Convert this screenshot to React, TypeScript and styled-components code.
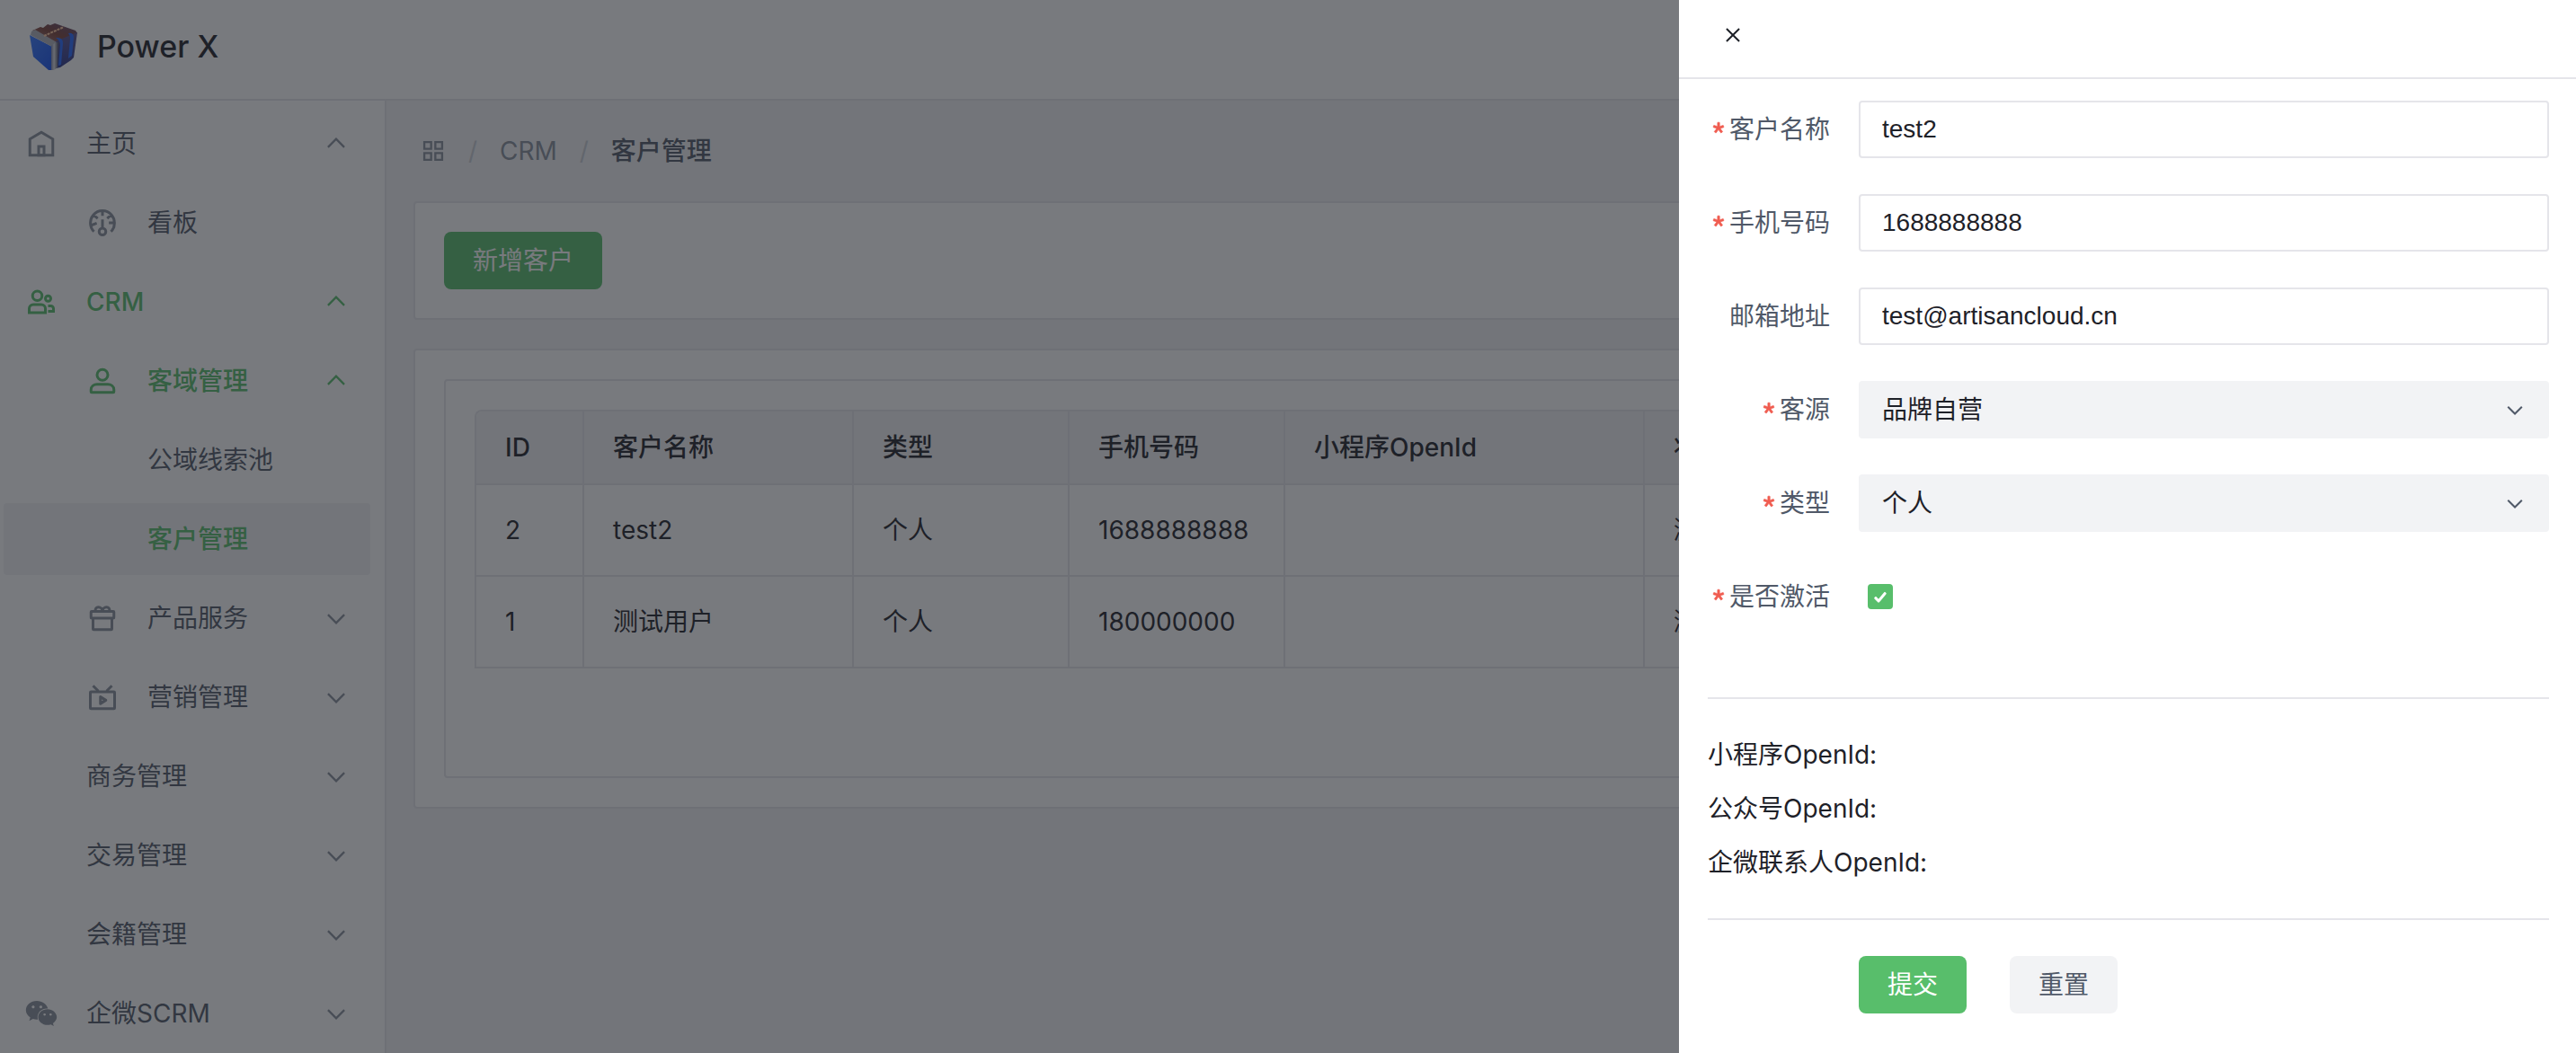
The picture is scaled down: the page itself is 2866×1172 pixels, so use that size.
import React, { useState } from "react";
import styled, { createGlobalStyle, css } from "styled-components";
import { FaWeixin } from "react-icons/fa6";

const color = {
  primary: "#58be6b",
  danger: "#f05c50",
  text1: "#1e2128",
  text2: "#505968",
  text3: "#88909b",
  text4: "#c9cdd4",
  border: "#e5e5ea",
  fill: "#f2f3f5",
  white: "#ffffff",
};

const uiFont = `Inter, "Noto Sans CJK SC", "Liberation Sans", sans-serif`;
const controlFont = `"Liberation Sans", "Noto Sans CJK SC", sans-serif`;

const GlobalStyle = createGlobalStyle`
  *, *::before, *::after { box-sizing: border-box; }
  body {
    margin: 0;
    background: ${color.fill};
    color: ${color.text1};
    font-family: ${uiFont};
    font-size: 28px;
    line-height: 44px;
    overflow: hidden;
  }
  button, input, select { font: inherit; color: inherit; }
`;

/* ---------- icons ---------- */

const Glyph = styled.svg<{ $size: number }>`
  display: block;
  flex: none;
  width: ${(p) => p.$size}px;
  height: ${(p) => p.$size}px;
  fill: none;
  stroke: currentColor;
  stroke-width: 4;
`;

type IconName =
  | "home" | "dashboard" | "group" | "user" | "gift" | "live" | "apps" | "up" | "down" | "close";

const shapes: Record<IconName, React.ReactNode> = {
  home: (
    <>
      <path d="M7 17 24 7l17 10v24H7V17Z" />
      <path d="M20 28h8v13h-8V28Z" />
    </>
  ),
  dashboard: (
    <>
      <path d="M41.808 24c.118 4.63-1.486 9.333-5.21 13m5.21-13h-8.309m8.309 0c-.112-4.38-1.767-8.694-4.627-12M24 6c5.531 0 10.07 2.404 13.18 6M24 6c-5.724 0-10.384 2.574-13.5 6.38M24 6v7.5M37.18 12 31 17.5m-20.5-5.12L17 17.5m-6.5-5.12C6.99 16.662 5.44 22.508 6.53 28m4.872 9c-2.65-2.609-4.226-5.742-4.873-9m0 0 8.97-3.5" />
      <path d="M24 32a5 5 0 1 0 0 10 5 5 0 0 0 0-10Zm0 0V19" />
    </>
  ),
  group: (
    <>
      <circle cx="18" cy="15" r="7" />
      <circle cx="34" cy="19" r="4" />
      <path d="M6 34a6 6 0 0 1 6-6h12a6 6 0 0 1 6 6v6H6v-6ZM34 30h4a4 4 0 0 1 4 4v4h-8" />
    </>
  ),
  user: (
    <>
      <path d="M7 37c0-4.97 4.03-8 9-8h16c4.97 0 9 3.03 9 8v3a1 1 0 0 1-1 1H8a1 1 0 0 1-1-1v-3Z" />
      <circle cx="24" cy="15" r="8" />
    </>
  ),
  gift: (
    <>
      <path d="M8 14h32a1 1 0 0 1 1 1v8a1 1 0 0 1-1 1H8a1 1 0 0 1-1-1v-8a1 1 0 0 1 1-1Z" />
      <path d="M10 24v16a1 1 0 0 0 1 1h26a1 1 0 0 0 1-1V24" />
      <path d="M13.500 14c-.5-4 1.500-6.500 4.500-6.500S24 10 24 14c0-4 3-6.500 6-6.500s5 2.500 4.500 6.500" />
    </>
  ),
  live: (
    <>
      <path d="M7 16h34a1 1 0 0 1 1 1v23a1 1 0 0 1-1 1H7a1 1 0 0 1-1-1V17a1 1 0 0 1 1-1Z" />
      <path d="m10 7 8 8M38 7l-8 8" />
      <path d="M21 23.500v10l8-5-8-5Z" strokeLinejoin="round" />
    </>
  ),
  apps: <path d="M7 7h13v13H7zM28 7h13v13H28zM7 28h13v13H7zM28 28h13v13H28z" />,
  up: <path d="M8.400 30.557 23.957 15l15.556 15.557" />,
  down: <path d="M39.600 17.443 24.043 33 8.487 17.443" />,
  close: <path d="M9.857 9.858 38.142 38.142M38.142 9.858 9.857 38.142" />,
};

const Icon = ({ name, size = 36 }: { name: IconName; size?: number }) => (
  <Glyph $size={size} viewBox="0 0 48 48" aria-hidden="true">
    {shapes[name]}
  </Glyph>
);

const LogoSvg = styled.svg`
  display: block;
  width: 56px;
  height: 56px;
`;

const Logo = () => (
  <LogoSvg viewBox="0 0 56 56" aria-hidden="true">
    <defs>
      <linearGradient id="logoTop" x1="0" y1="1" x2="1" y2="0">
        <stop offset="0" stopColor="#a07a80" />
        <stop offset="0.5" stopColor="#7c4238" />
        <stop offset="1" stopColor="#5a4672" />
      </linearGradient>
      <linearGradient id="logoFront" x1="0" y1="0" x2="1" y2="1">
        <stop offset="0" stopColor="#3678ff" />
        <stop offset="1" stopColor="#1450f0" />
      </linearGradient>
      <linearGradient id="logoSide" x1="0" y1="0" x2="0" y2="1">
        <stop offset="0" stopColor="#5c5490" />
        <stop offset="1" stopColor="#26348c" />
      </linearGradient>
      <linearGradient id="logoEdge" x1="0" y1="0" x2="1" y2="0">
        <stop offset="0" stopColor="#8088a8" />
        <stop offset="0.4" stopColor="#dcdde4" />
        <stop offset="1" stopColor="#4c4c60" />
      </linearGradient>
    </defs>
    <path d="M4 10 13 6l3 1 5-4 3 1 5-2 23 8 2 3-26 12Z" fill="url(#logoTop)" />
    <path d="M30 22 54 12l-4 28-3 3-12 8-5 1Z" fill="url(#logoSide)" />
    <path d="M1 15 26 28l-1 26-3 0L5 39Z" fill="url(#logoFront)" />
    <path d="m3 11 4-2 24 14-5 5L2 15Z" fill="#b0b2bc" />
    <path d="M25 27q4-4 8-4l-1 28-4 3h-3Z" fill="url(#logoEdge)" />
    <path d="M30 18q8-1 8 6l-2 24-3 1 2-23q0-5-5-8Z" fill="#2468ff" />
    <path d="M44 13q6-1 6 5l-2 20-4 3 2-22q0-4-2-6Z" fill="#2468ff" />
    <path d="m17 16 22-10" stroke="#ffc9a0" strokeWidth="2" strokeDasharray="3 1" />
  </LogoSvg>
);

/* ---------- page frame ---------- */

const Page = styled.div`
  display: flex;
  flex-direction: column;
  height: 100vh;
  overflow: hidden;
`;

const TopBar = styled.header`
  display: flex;
  flex: none;
  align-items: center;
  gap: 20px;
  height: 112px;
  padding: 0 32px 6px;
  background: ${color.white};
  border-bottom: 2px solid ${color.border};
`;

const Brand = styled.h1`
  margin: 0;
  font-size: 34px;
  font-weight: 500;
`;

const Body = styled.div`
  display: flex;
  flex: 1;
  min-height: 0;
`;

const Sidebar = styled.nav`
  flex: none;
  width: 430px;
  padding: 8px 16px 8px 4px;
  overflow: hidden;
  background: ${color.white};
  border-right: 2px solid ${color.border};
`;

const Menu = styled.ul`
  display: flex;
  flex-direction: column;
  gap: 8px;
  margin: 0;
  padding: 0;
  list-style: none;
`;

const MenuButton = styled.button<{ $level: number; $active?: boolean; $selected?: boolean }>`
  display: flex;
  align-items: center;
  gap: 32px;
  width: 100%;
  height: 80px;
  padding: 0 24px 0 ${(p) => 24 + 68 * p.$level}px;
  border: 0;
  border-radius: 4px;
  background: ${(p) => (p.$selected ? color.fill : "transparent")};
  color: ${(p) => (p.$active ? color.primary : color.text2)};
  font-weight: ${(p) => (p.$active ? 500 : 400)};
  text-align: left;
  cursor: pointer;
`;

const MenuIcon = styled.span<{ $active?: boolean }>`
  display: flex;
  flex: none;
  color: ${(p) => (p.$active ? color.primary : color.text3)};
`;

const MenuText = styled.span`
  flex: 1;
`;

type MenuEntry = {
  label: string;
  level: number;
  icon?: React.ReactNode;
  arrow?: "up" | "down";
  active?: boolean;
  selected?: boolean;
};

const menu: MenuEntry[] = [
  { label: "主页", level: 0, icon: <Icon name="home" />, arrow: "up" },
  { label: "看板", level: 1, icon: <Icon name="dashboard" /> },
  { label: "CRM", level: 0, icon: <Icon name="group" />, arrow: "up", active: true },
  { label: "客域管理", level: 1, icon: <Icon name="user" />, arrow: "up", active: true },
  { label: "公域线索池", level: 2 },
  { label: "客户管理", level: 2, active: true, selected: true },
  { label: "产品服务", level: 1, icon: <Icon name="gift" />, arrow: "down" },
  { label: "营销管理", level: 1, icon: <Icon name="live" />, arrow: "down" },
  { label: "商务管理", level: 1, arrow: "down" },
  { label: "交易管理", level: 1, arrow: "down" },
  { label: "会籍管理", level: 1, arrow: "down" },
  { label: "企微SCRM", level: 0, icon: <FaWeixin size={36} />, arrow: "down" },
];

/* ---------- main area ---------- */

const Main = styled.main`
  display: flex;
  flex: 1;
  flex-direction: column;
  gap: 32px;
  min-width: 0;
  padding: 0 30px;
`;

const Crumbs = styled.nav`
  display: flex;
  align-items: center;
  gap: 24px;
  height: 80px;
  padding: 32px 8px 0;
  color: ${color.text3};
`;

const CrumbLink = styled.a`
  color: inherit;
  text-decoration: none;
`;

const CrumbSlash = styled.span`
  width: 12px;
  color: ${color.text4};
  text-align: center;
`;

const CrumbCurrent = styled.span`
  color: ${color.text2};
  font-weight: 500;
`;

const Card = styled.section`
  padding: 32px;
  background: ${color.white};
  border: 2px solid ${color.border};
  border-radius: 4px;
`;

const TableCard = styled(Card)`
  min-height: 444px;
`;

const Button = styled.button<{ $primary?: boolean }>`
  height: 64px;
  padding: 0 32px;
  border: 0;
  border-radius: 8px;
  background: ${(p) => (p.$primary ? color.primary : color.fill)};
  color: ${(p) => (p.$primary ? color.white : color.text2)};
  cursor: pointer;
`;

const Table = styled.table`
  width: 100%;
  table-layout: fixed;
  border-collapse: separate;
  border-spacing: 0;
  border-top: 2px solid ${color.border};
  border-left: 2px solid ${color.border};
  border-radius: 8px 0 0 0;
`;

const cell = css`
  padding: 0 32px;
  border-right: 2px solid ${color.border};
  border-bottom: 2px solid ${color.border};
  text-align: left;
  white-space: nowrap;
`;

const HeadCell = styled.th`
  ${cell}
  height: 82px;
  background: ${color.fill};
  font-weight: 500;
  &:first-child { border-top-left-radius: 6px; }
`;

const DataCell = styled.td`
  ${cell}
  height: 102px;
`;

const Column = styled.col<{ $width?: number }>`
  width: ${(p) => (p.$width ? `${p.$width}px` : "auto")};
`;

const columns = [
  { title: "ID", width: 120 },
  { title: "客户名称", width: 300 },
  { title: "类型", width: 240 },
  { title: "手机号码", width: 240 },
  { title: "小程序OpenId", width: 400 },
  { title: "状态", width: undefined },
];

const customers = [
  ["2", "test2", "个人", "1688888888", "", "激活"],
  ["1", "测试用户", "个人", "180000000", "", "激活"],
];

/* ---------- drawer ---------- */

const Mask = styled.div`
  position: fixed;
  inset: 0;
  background: rgba(30, 33, 40, 0.6);
`;

const Drawer = styled.aside`
  position: fixed;
  top: 0;
  right: 0;
  bottom: 0;
  width: 998px;
  max-width: 100%;
  overflow: hidden;
  background: ${color.white};
`;

const DrawerHead = styled.div`
  display: flex;
  align-items: center;
  height: 88px;
  padding: 0 40px 8px;
  border-bottom: 2px solid ${color.border};
`;

const CloseButton = styled.button`
  display: flex;
  align-items: center;
  justify-content: center;
  width: 40px;
  height: 40px;
  padding: 0;
  border: 0;
  background: transparent;
  cursor: pointer;
`;

const Form = styled.form`
  padding: 24px 30px 0 32px;
`;

const Field = styled.div`
  display: grid;
  grid-template-columns: 136px 1fr;
  align-items: center;
  gap: 32px;
  height: 64px;
  margin-bottom: 40px;
`;

const FieldLabel = styled.label`
  display: flex;
  align-items: center;
  justify-content: flex-end;
  gap: 6px;
  color: ${color.text2};
  white-space: nowrap;
`;

const Star = styled.svg`
  flex: none;
  width: 12px;
  height: 12px;
  margin-bottom: 4px;
  overflow: visible;
  fill: ${color.danger};
  stroke: ${color.danger};
  stroke-width: 50;
`;

const TextInput = styled.input`
  width: 100%;
  height: 64px;
  padding: 0 24px;
  border: 2px solid ${color.border};
  border-radius: 4px;
  background: ${color.white};
  color: ${color.text1};
  font-family: ${controlFont};
  outline: none;
`;

const SelectWrap = styled.div`
  position: relative;
`;

const SelectBox = styled.select`
  display: block;
  width: 100%;
  height: 64px;
  padding: 0 64px 0 26px;
  border: 0;
  border-radius: 4px;
  background: ${color.fill};
  color: ${color.text1};
  appearance: none;
`;

const SelectArrow = styled.span`
  position: absolute;
  top: 20px;
  right: 26px;
  color: ${color.text2};
  pointer-events: none;
`;

const CheckWrap = styled.span`
  display: grid;
  width: 28px;
  height: 28px;
  margin-left: 10px;
  place-items: center;
  & > * { grid-area: 1 / 1; }
`;

const CheckInput = styled.input`
  width: 28px;
  height: 28px;
  margin: 0;
  border: 2px solid ${color.border};
  border-radius: 4px;
  appearance: none;
  &:checked {
    border-color: ${color.primary};
    background: ${color.primary};
  }
`;

const Tick = styled.svg`
  width: 16px;
  height: 16px;
  fill: ${color.white};
  pointer-events: none;
`;

const OpenIds = styled.div`
  display: flex;
  flex-direction: column;
  gap: 16px;
  margin-top: 80px;
  padding: 40px 0;
  border-top: 2px solid ${color.border};
  border-bottom: 2px solid ${color.border};
`;

const Actions = styled.div`
  display: flex;
  gap: 48px;
  padding: 40px 0 0 168px;
`;

const RequiredMark = () => (
  <Star viewBox="0 0 1024 1024" aria-hidden="true">
    <path d="M583.339 17.067c18.773 0 34.133 15.360 34.133 34.133v349.013l313.344-101.888a34.133 34.133 0 0 1 43.008 22.016l42.155 129.707a34.133 34.133 0 0 1-21.845 43.179l-315.734 102.400 208.896 287.744a34.133 34.133 0 0 1-7.509 47.787l-110.421 80.213a34.133 34.133 0 0 1-47.787-7.509L505.685 706.219 288.427 1005.227a34.133 34.133 0 0 1-47.787 7.509l-110.421-80.213a34.133 34.133 0 0 1-7.510-47.787l214.187-295.253L29.013 489.813a34.133 34.133 0 0 1-22.016-43.008l42.155-129.877a34.133 34.133 0 0 1 43.008-22.016l320.512 104.107L412.672 51.200c0-18.773 15.360-34.133 34.133-34.133h136.534z" />
  </Star>
);

const FormField = ({
  id,
  label,
  required,
  children,
}: {
  id: string;
  label: string;
  required?: boolean;
  children: React.ReactNode;
}) => (
  <Field>
    <FieldLabel htmlFor={id}>
      {required && <RequiredMark />}
      {label}
    </FieldLabel>
    {children}
  </Field>
);

const SelectField = ({ id, options }: { id: string; options: string[] }) => (
  <SelectWrap>
    <SelectBox id={id} defaultValue={options[0]}>
      {options.map((o) => (
        <option key={o}>{o}</option>
      ))}
    </SelectBox>
    <SelectArrow>
      <Icon name="down" size={24} />
    </SelectArrow>
  </SelectWrap>
);

const CustomerDrawer = ({ onClose }: { onClose: () => void }) => {
  const [active, setActive] = useState(true);
  return (
    <>
      <Mask onClick={onClose} />
      <Drawer role="dialog" aria-label="客户管理">
        <DrawerHead>
          <CloseButton type="button" aria-label="关闭" onClick={onClose}>
            <Icon name="close" size={24} />
          </CloseButton>
        </DrawerHead>
        <Form onSubmit={(e) => e.preventDefault()}>
          <FormField id="name" label="客户名称" required>
            <TextInput id="name" defaultValue="test2" />
          </FormField>
          <FormField id="mobile" label="手机号码" required>
            <TextInput id="mobile" defaultValue="1688888888" />
          </FormField>
          <FormField id="email" label="邮箱地址">
            <TextInput id="email" defaultValue="test@artisancloud.cn" />
          </FormField>
          <FormField id="source" label="客源" required>
            <SelectField id="source" options={["品牌自营"]} />
          </FormField>
          <FormField id="type" label="类型" required>
            <SelectField id="type" options={["个人"]} />
          </FormField>
          <FormField id="activated" label="是否激活" required>
            <CheckWrap>
              <CheckInput
                id="activated"
                type="checkbox"
                checked={active}
                onChange={(e) => setActive(e.target.checked)}
              />
              {active && (
                <Tick viewBox="0 0 1024 1024" aria-hidden="true">
                  <path d="M877.448 206.101a64.727 64.727 0 0 0-95.149 4.013L380.734 685.468 235.228 533.489a64.727 64.727 0 0 0-92.430-1.036l-45.827 45.827a64.727 64.727 0 0 0-.906 90.618l239.619 250.105a64.727 64.727 0 0 0 71.200 15.146 64.339 64.339 0 0 0 35.082-21.230l36.247-42.720 40.519-40.778-3.366-3.495 411.404-486.746a64.727 64.727 0 0 0-3.884-87.640l-45.309-45.438z" />
                </Tick>
              )}
            </CheckWrap>
          </FormField>
          <OpenIds>
            <span>小程序OpenId:</span>
            <span>公众号OpenId:</span>
            <span>企微联系人OpenId:</span>
          </OpenIds>
          <Actions>
            <Button type="submit" $primary>提交</Button>
            <Button type="reset">重置</Button>
          </Actions>
        </Form>
      </Drawer>
    </>
  );
};

export default function App() {
  const [open, setOpen] = useState(true);
  return (
    <>
      <GlobalStyle />
      <Page>
        <TopBar>
          <Logo />
          <Brand>Power X</Brand>
        </TopBar>
        <Body>
          <Sidebar>
            <Menu>
              {menu.map((m) => (
                <li key={m.label}>
                  <MenuButton type="button" $level={m.level} $active={m.active} $selected={m.selected}>
                    {m.icon && <MenuIcon $active={m.active}>{m.icon}</MenuIcon>}
                    <MenuText>{m.label}</MenuText>
                    {m.arrow && (
                      <MenuIcon $active={m.active}>
                        <Icon name={m.arrow} size={28} />
                      </MenuIcon>
                    )}
                  </MenuButton>
                </li>
              ))}
            </Menu>
          </Sidebar>
          <Main>
            <Crumbs>
              <Icon name="apps" size={28} />
              <CrumbSlash>/</CrumbSlash>
              <CrumbLink href="#crm">CRM</CrumbLink>
              <CrumbSlash>/</CrumbSlash>
              <CrumbCurrent>客户管理</CrumbCurrent>
            </Crumbs>
            <Card>
              <Button type="button" $primary onClick={() => setOpen(true)}>新增客户</Button>
            </Card>
            <Card>
              <TableCard as="div">
                <Table>
                  <colgroup>
                    {columns.map((c) => (
                      <Column key={c.title} $width={c.width} />
                    ))}
                  </colgroup>
                  <thead>
                    <tr>
                      {columns.map((c) => (
                        <HeadCell key={c.title}>{c.title}</HeadCell>
                      ))}
                    </tr>
                  </thead>
                  <tbody>
                    {customers.map((row) => (
                      <tr key={row[0]}>
                        {row.map((value, i) => (
                          <DataCell key={i}>{value}</DataCell>
                        ))}
                      </tr>
                    ))}
                  </tbody>
                </Table>
              </TableCard>
            </Card>
          </Main>
        </Body>
      </Page>
      {open && <CustomerDrawer onClose={() => setOpen(false)} />}
    </>
  );
}
